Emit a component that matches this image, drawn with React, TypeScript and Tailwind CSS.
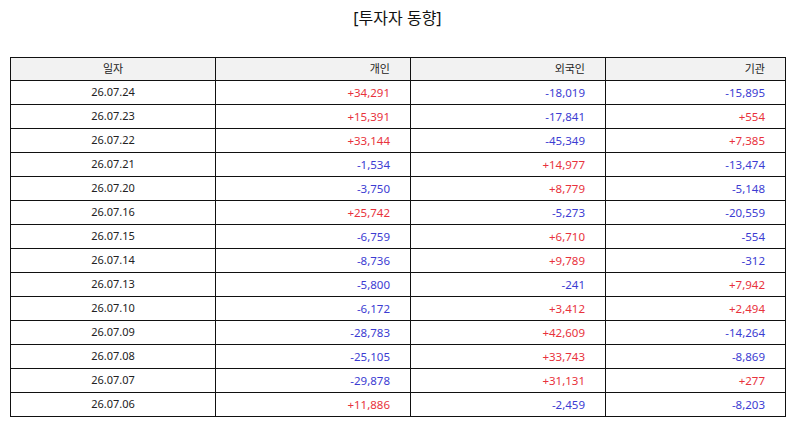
const rows: [string, string, string, string][] = [
  ["26.07.24", "+34,291", "-18,019", "-15,895"],
  ["26.07.23", "+15,391", "-17,841", "+554"],
  ["26.07.22", "+33,144", "-45,349", "+7,385"],
  ["26.07.21", "-1,534", "+14,977", "-13,474"],
  ["26.07.20", "-3,750", "+8,779", "-5,148"],
  ["26.07.16", "+25,742", "-5,273", "-20,559"],
  ["26.07.15", "-6,759", "+6,710", "-554"],
  ["26.07.14", "-8,736", "+9,789", "-312"],
  ["26.07.13", "-5,800", "-241", "+7,942"],
  ["26.07.10", "-6,172", "+3,412", "+2,494"],
  ["26.07.09", "-28,783", "+42,609", "-14,264"],
  ["26.07.08", "-25,105", "+33,743", "-8,869"],
  ["26.07.07", "-29,878", "+31,131", "+277"],
  ["26.07.06", "+11,886", "-2,459", "-8,203"],
];

function Num({ v }: { v: string }) {
  const up = v.startsWith("+");
  return (
    <td
      className={
        "border border-[#111] pr-[20px] text-right text-[11.5px] " +
        (up ? "text-[#e8323c]" : "text-[#3c3cd2]")
      }
    >
      {v}
    </td>
  );
}

export default function App() {
  return (
    <div
      className="w-[795px] h-[425px] bg-white text-[#222]"
      style={{ fontFamily: '"Noto Sans", "Noto Sans CJK KR", sans-serif' }}
    >
      <h1 className="pt-[6px] h-[57px] text-center text-[16px] leading-[24px] text-[#111]">
        [투자자 동향]
      </h1>
      <table className="ml-[10px] w-[775px] table-fixed border-collapse text-[11px]">
        <colgroup>
          <col className="w-[205px]" />
          <col className="w-[195px]" />
          <col className="w-[195px]" />
          <col className="w-[180px]" />
        </colgroup>
        <thead>
          <tr className="h-[23px] bg-[#f2f2f2]">
            <th className="border border-[#111] font-normal text-center">일자</th>
            <th className="border border-[#111] font-normal text-right pr-[20px]">개인</th>
            <th className="border border-[#111] font-normal text-right pr-[20px]">외국인</th>
            <th className="border border-[#111] font-normal text-right pr-[20px]">기관</th>
          </tr>
        </thead>
        <tbody>
          {rows.map((r) => (
            <tr key={r[0]} className="h-[24px]">
              <td className="border border-[#111] text-center">{r[0]}</td>
              <Num v={r[1]} />
              <Num v={r[2]} />
              <Num v={r[3]} />
            </tr>
          ))}
        </tbody>
      </table>
    </div>
  );
}
